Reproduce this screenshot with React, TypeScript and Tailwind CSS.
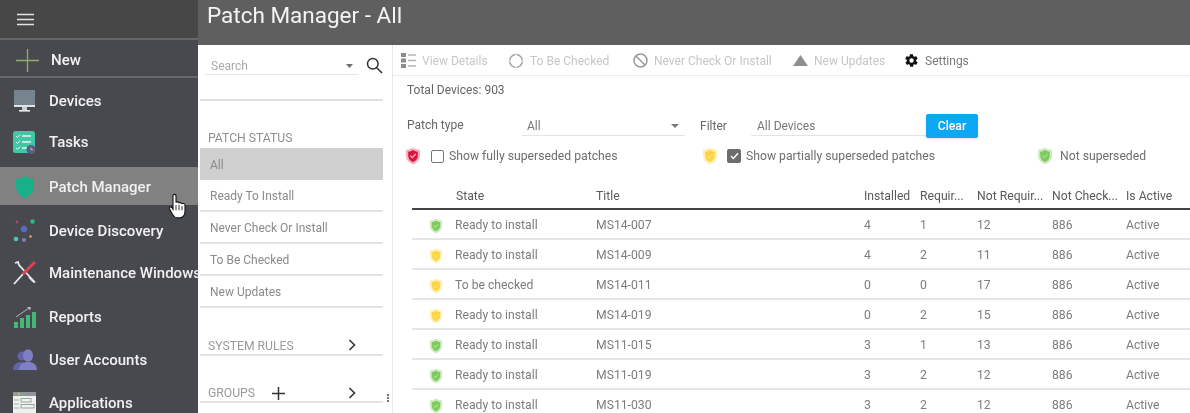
import React from "react";

const Shield = ({ fill, edge, check, w = 16, h = 18 }: { fill: string; edge: string; check: string; w?: number; h?: number }) => (
  <svg width={w} height={h} viewBox="0 0 16 18" preserveAspectRatio="none" className="shrink-0">
    <path d="M8 .6C10 2 12.4 2.7 15 2.8V8.5C15 12.8 12.2 15.6 8 17.4 3.8 15.6 1 12.8 1 8.5V2.8C3.6 2.7 6 2 8 .6Z" fill={edge} />
    <path d="M8 3C9.6 4 11.2 4.5 12.8 4.7V8.7C12.8 11.6 11 13.6 8 15 5 13.6 3.2 11.6 3.2 8.7V4.7C4.8 4.5 6.4 4 8 3Z" fill={fill} />
    <path d="M5.3 8.6 7.3 10.6 10.8 6.8" fill="none" stroke={check} strokeWidth="1.2" />
  </svg>
);
const green = { fill: "#7ccb5b", edge: "#cfeac2", check: "#a6dd8e" };
const yellow = { fill: "#fdd53f", edge: "#fdf0b5", check: "#fde27f" };

const NavRow = ({ icon, label, active, h }: { icon: React.ReactNode; label: string; active?: boolean; h: string }) => (
  <div className={`flex items-center ${h} ${active ? "bg-[#818181] pt-[2px]" : ""} text-[#f1f1f3] text-[15px] font-medium whitespace-nowrap overflow-hidden`}>
    <div className="w-[49px] pl-[13px] shrink-0 flex items-center">{icon}</div>
    <span>{label}</span>
  </div>
);

const DevicesIcon = () => (
  <svg width="23" height="22" viewBox="0 0 23 22"><rect x="1" y="0" width="21" height="15" fill="#76848f" /><rect x="1" y="15" width="21" height="2" fill="#dfe3e6" /><rect x="9" y="17" width="5" height="3" fill="#c9ced2" /><rect x="6" y="20" width="11" height="1.6" fill="#e8e8e8" /></svg>
);
const TasksIcon = () => (
  <svg width="23" height="23" viewBox="0 0 23 23"><rect x="0" y="0" width="22" height="22" rx="2.5" fill="#3fc7a6" /><path d="M3 5 4.5 6.5 7 3.5M3 11 4.5 12.5 7 9.5M3 17 4.5 18.5 7 15.5" fill="none" stroke="#e4f7f1" strokeWidth="1" /><path d="M9 5H18M9 11H18M9 17H14" stroke="#e4f7f1" strokeWidth="1.3" /><circle cx="18" cy="18.5" r="4.5" fill="#5d5a80" /><path d="M18 16.5V18.7H20" stroke="#d5d3e4" strokeWidth=".8" fill="none" /></svg>
);
const DiscoveryIcon = () => (
  <svg width="24" height="24" viewBox="0 0 24 24"><circle cx="4" cy="3" r="1.4" fill="#a8486c" /><circle cx="19.5" cy="2.5" r="2.3" fill="#2fb57f" /><circle cx="11" cy="10" r="3.2" fill="#5c68bd" /><circle cx="3" cy="20" r="2.3" fill="#4cc9b0" /><circle cx="11" cy="21" r="2.1" fill="#8d76b8" /><circle cx="17.5" cy="17.5" r="1.2" fill="#d9b64a" /></svg>
);
const MaintIcon = () => (
  <svg width="24" height="24" viewBox="0 0 24 24"><path d="M2 2 5 1 6 4 22 21.5" fill="none" stroke="#ebebeb" strokeWidth="1.8" /><path d="M16 16 21 21" stroke="#e8e8e8" strokeWidth="2" /><path d="M1 23 10 13" stroke="#ebebeb" strokeWidth="1.8" /><path d="M10 13 22 1" stroke="#d84450" strokeWidth="3" /></svg>
);
const ReportsIcon = () => (
  <svg width="23" height="22" viewBox="0 0 23 22"><rect x="1" y="16" width="4" height="6" fill="#45b877" /><rect x="7" y="12" width="4" height="10" fill="#45b877" /><rect x="13" y="9" width="4" height="13" fill="#45b877" /><rect x="19" y="6" width="4" height="16" fill="#45b877" /><path d="M3 11 16 2" stroke="#b5b5b8" strokeWidth="1" /><path d="M14 1 18 1 17 4.5Z" fill="#b5b5b8" /></svg>
);
const UsersIcon = () => (
  <svg width="24" height="22" viewBox="0 0 24 22"><circle cx="9" cy="7" r="4.5" fill="#6263a8" /><path d="M0 21C0 15 4 13 9 13S14 16 14 21Z" fill="#6263a8" /><ellipse cx="15" cy="6.5" rx="5" ry="6.3" fill="#7f80c4" /><path d="M6 21C6 15.5 10 13 15 13S24 15.5 24 21Z" fill="#7f80c4" /></svg>
);
const AppsIcon = () => (
  <svg width="23" height="23" viewBox="0 0 23 23"><rect width="23" height="23" fill="#eef1ee" /><rect width="23" height="4" fill="#8f9498" /><circle cx="2.5" cy="2" r="1" fill="#d9a24a" /><circle cx="6" cy="2" r="1" fill="#c9d06a" /><circle cx="9.5" cy="2" r="1" fill="#7fb66a" /><path d="M1 8H6M1 12H6M1 16H6" stroke="#9db4a4" /><rect x="8" y="6.5" width="10" height="3.5" fill="none" stroke="#9aa5a0" /><rect x="8" y="12.5" width="13" height="3.5" fill="none" stroke="#9aa5a0" /></svg>
);

const StatusItem = ({ label, active }: { label: string; active?: boolean }) => (
  <div className={`h-[32px] pl-[10px] pt-[2px] flex items-center text-[12px] text-[#8a8a8a] ${active ? "bg-[#cfcfcf]" : "border-b-2 border-[#e3e3e3]"}`}>
    {label}
  </div>
);

const Tool = ({ icon, label, dark, w }: { icon: React.ReactNode; label: string; dark?: boolean; w: string }) => (
  <div className={`flex items-center gap-[6px] ${w} text-[12px] ${dark ? "text-[#7a7a7a]" : "text-[#c6c6c6]"} whitespace-nowrap`}>
    {icon}
    <span>{label}</span>
  </div>
);

const rows = [
  ["g", "Ready to install", "MS14-007", "4", "1", "12", "886"],
  ["y", "Ready to install", "MS14-009", "4", "2", "11", "886"],
  ["y", "To be checked", "MS14-011", "0", "0", "17", "886"],
  ["y", "Ready to install", "MS14-019", "0", "2", "15", "886"],
  ["g", "Ready to install", "MS11-015", "3", "1", "13", "886"],
  ["g", "Ready to install", "MS11-019", "3", "2", "12", "886"],
  ["g", "Ready to install", "MS11-030", "3", "2", "12", "886"],
];
const grid = "grid grid-cols-[43px_141px_268px_56px_57px_75px_74px_1fr] items-center";

export default function App() {
  return (
    <div className="w-[1190px] h-[413px] overflow-hidden flex bg-white font-['Roboto',sans-serif] relative blur-[0.35px]">
      <aside className="w-[198px] shrink-0 bg-[#48494e] flex flex-col">
        <div className="h-[40px] shrink-0 bg-[#474747] border-b-2 border-[#66676a] flex items-center pl-[17px]">
          <svg width="17" height="13" viewBox="0 0 17 13"><path d="M0 1.5H17M0 6.5H17M0 11.5H17" stroke="#e4e4e4" strokeWidth="1.5" /></svg>
        </div>
        <div className="h-[38px] shrink-0 pt-[4px] border-b-2 border-[#66676a] flex items-center pl-[16px] text-[15px] font-medium text-[#f3f3f3]">
          <svg width="23" height="23" viewBox="0 0 23 23" className="mr-[12px]"><path d="M11.5 0V23M0 11.5H23" stroke="#92ad6a" strokeWidth="1.3" /></svg>
          New
        </div>
        <NavRow h="h-[46px] shrink-0" icon={<DevicesIcon />} label="Devices" />
        <NavRow h="h-[36px] shrink-0" icon={<TasksIcon />} label="Tasks" />
        <div className="h-[7px] shrink-0" />
        <NavRow h="h-[38px] shrink-0" active icon={<span className="pl-[3px] flex"><svg width="18" height="22" viewBox="0 0 18 22"><path d="M9 0C11.5 1.7 14.5 2.7 18 3V10C18 15.5 14.5 19.5 9 22 3.5 19.5 0 15.5 0 10V3C3.5 2.7 6.5 1.7 9 0Z" fill="#17b088" /></svg></span>} label="Patch Manager" />
        <NavRow h="h-[52px] shrink-0" icon={<DiscoveryIcon />} label="Device Discovery" />
        <NavRow h="h-[32px] shrink-0" icon={<MaintIcon />} label="Maintenance Windows" />
        <NavRow h="h-[56px] shrink-0" icon={<ReportsIcon />} label="Reports" />
        <NavRow h="h-[30px] shrink-0" icon={<UsersIcon />} label="User Accounts" />
        <NavRow h="h-[56px] shrink-0" icon={<AppsIcon />} label="Applications" />
      </aside>

      <div className="flex-1 flex flex-col min-w-0">
        <header className="h-[45px] shrink-0 bg-[#5f5f5f] pl-[9px] text-[22.5px] leading-[30px] text-[#f4f4f4]">
          Patch Manager - All
        </header>
        <div className="flex-1 flex min-h-0">
          <section className="w-[183px] shrink-0 ml-[2px] flex flex-col">
            <div className="h-[56px] shrink-0 border-b-2 border-[#e0e0e0] pt-[9px] pl-[5px] flex items-start">
              <div className="w-[154px] h-[21px] pt-[3px] border-b border-[#e6e6e6] flex items-center justify-between pl-[6px] pr-[6px] text-[12px] text-[#aaaaaa]">
                Search
                <svg width="7" height="4" viewBox="0 0 7 4"><path d="M0 0H7L3.5 4Z" fill="#6f6f6f" /></svg>
              </div>
              <svg width="17" height="17" viewBox="0 0 17 17" className="ml-[7px] mt-[3px]"><circle cx="6.8" cy="6.8" r="5.3" fill="none" stroke="#333" strokeWidth="1.5" /><path d="M10.7 10.7 16 16" stroke="#333" strokeWidth="1.6" /></svg>
            </div>
            <div className="h-[47px] shrink-0 pl-[8px] pt-[29px] text-[12.2px] leading-[16px] text-[#8f8f8f]">PATCH STATUS</div>
            <StatusItem label="All" active />
            <StatusItem label="Ready To Install" />
            <StatusItem label="Never Check Or Install" />
            <StatusItem label="To Be Checked" />
            <StatusItem label="New Updates" />
            <div className="h-[48px] shrink-0 border-b-2 border-[#e3e3e3] pl-[8px] pr-[26px] flex items-end justify-between text-[12.2px] leading-[13px] text-[#9a9a9a] pb-[1px]">
              <span>SYSTEM RULES</span>
              <svg width="9" height="12" viewBox="0 0 9 12" className="mb-[2px]"><path d="M1.5 1 6.5 6 1.5 11" fill="none" stroke="#333" strokeWidth="1.6" /></svg>
            </div>
            <div className="h-[47px] shrink-0 border-b-2 border-[#e3e3e3] pl-[8px] pr-[26px] flex items-end text-[12.2px] leading-[13px] text-[#9a9a9a] pb-[1px]">
              <span>GROUPS</span>
              <svg width="13" height="13" viewBox="0 0 13 13" className="ml-[17px]"><path d="M6.5 0V13M0 6.5H13" stroke="#333" strokeWidth="1.5" /></svg>
              <svg width="9" height="12" viewBox="0 0 9 12" className="ml-auto mb-[1px]"><path d="M1.5 1 6.5 6 1.5 11" fill="none" stroke="#333" strokeWidth="1.6" /></svg>
            </div>
          </section>

          <div className="w-[10px] shrink-0 flex flex-col items-center justify-end pb-[11px] gap-[1px] border-r border-[#e8e8e8]">
            <span className="w-[2px] h-[2px] bg-[#777]" />
            <span className="w-[2px] h-[2px] bg-[#777]" />
            <span className="w-[2px] h-[2px] bg-[#777]" />
          </div>

          <main className="flex-1 min-w-0 flex flex-col">
            <div className="h-[31px] shrink-0 pt-[1px] border-b border-[#ececec] flex items-center pl-[8px]">
              <Tool w="w-[107px]" label="View Details" icon={<svg width="15" height="15" viewBox="0 0 15 15"><path d="M0 0H5V4H0ZM0 5.5H5V9.5H0ZM0 11H5V15H0Z" fill="#8c8c8c" /><path d="M7 2H15M7 7.5H15M7 13H15" stroke="#b5b5b5" strokeWidth="1.3" /></svg>} />
              <Tool w="w-[125px]" label="To Be Checked" icon={<svg width="16" height="16" viewBox="0 0 16 16"><circle cx="8" cy="8" r="6.4" fill="none" stroke="#a3a3a3" strokeWidth="1.5" /><path d="M8 0V3M8 13V16M0 8H3M13 8H16" stroke="#fff" strokeWidth="1" /></svg>} />
              <Tool w="w-[160px]" label="Never Check Or Install" icon={<svg width="15" height="15" viewBox="0 0 15 15"><circle cx="7.5" cy="7.5" r="6.5" fill="none" stroke="#9a9a9a" strokeWidth="1.5" /><path d="M3 3 12 12" stroke="#9a9a9a" strokeWidth="1.5" /></svg>} />
              <Tool w="w-[111px]" label="New Updates" icon={<svg width="15" height="11" viewBox="0 0 15 11"><path d="M7.5 0 15 11H0Z" fill="#8f8f8f" /></svg>} />
              <Tool w="w-[80px]" dark label="Settings" icon={<svg width="15" height="15" viewBox="0 0 24 24"><path fill="#111" d="M19.4 13c0-.3.1-.6.1-1s0-.7-.1-1l2.1-1.6c.2-.2.2-.4.1-.6l-2-3.5c-.1-.2-.4-.3-.6-.2l-2.5 1c-.5-.4-1.1-.7-1.7-1l-.4-2.6c0-.3-.2-.5-.5-.5h-4c-.3 0-.5.2-.5.4l-.4 2.7c-.6.2-1.2.6-1.7 1l-2.5-1c-.2-.1-.5 0-.6.2l-2 3.5c-.1.2-.1.5.1.6L4.6 11c0 .3-.1.7-.1 1s0 .7.1 1l-2.1 1.6c-.2.2-.2.4-.1.6l2 3.5c.1.2.4.3.6.2l2.5-1c.5.4 1.1.7 1.7 1l.4 2.6c0 .3.2.5.5.5h4c.3 0 .5-.2.5-.4l.4-2.7c.6-.2 1.2-.6 1.7-1l2.5 1c.2.1.5 0 .6-.2l2-3.5c.1-.2.1-.5-.1-.6zM12 15.5a3.5 3.5 0 1 1 0-7 3.5 3.5 0 0 1 0 7z" /></svg>} />
            </div>
            <div className="h-[34px] shrink-0 pl-[14px] pt-[6px] text-[12px] leading-[16px] text-[#666]">Total Devices: 903</div>
            <div className="h-[32px] shrink-0 flex items-center pl-[14px] text-[12px] text-[#666]">
              <span className="w-[115px] -mt-[3px]">Patch type</span>
              <div className="w-[163px] h-[22px] -mt-[2px] pt-[3px] border-b border-[#e4e4e4] flex items-center justify-between pl-[5px] pr-[6px] text-[#777]">
                All
                <svg width="8" height="4" viewBox="0 0 8 4"><path d="M0 0H8L4 4Z" fill="#777" /></svg>
              </div>
              <span className="ml-[15px] w-[51px] -mt-[1px]">Filter</span>
              <div className="w-[175px] h-[22px] -mt-[2px] pt-[3px] border-b border-[#e4e4e4] pl-[6px] flex items-center text-[#777]">All Devices</div>
              <div className="w-[52px] h-[24px] bg-[#0da7f3] rounded-[2px] shadow-sm text-white text-[12.2px] font-medium flex items-center justify-center">Clear</div>
            </div>
            <div className="h-[29px] shrink-0 flex items-center text-[12.2px] text-[#6e6e6e]">
              <div className="w-[309px] flex items-center pl-[12px]">
                <Shield fill="#dc143c" edge="#f3b2bf" check="#f7c2ce" />
                <span className="w-[13px] h-[13px] ml-[10px] mr-[5px] rounded-[2px] border-[1.5px] border-[#777]" />
                Show fully superseded patches
              </div>
              <div className="w-[335px] flex items-center">
                <Shield {...yellow} />
                <span className="w-[14px] h-[14px] ml-[9px] mr-[5px] rounded-[2px] bg-[#6d6d6d] flex items-center justify-center">
                  <svg width="9" height="8" viewBox="0 0 9 8"><path d="M1 4 3.4 6.4 8 1.2" fill="none" stroke="#fff" strokeWidth="1.4" /></svg>
                </span>
                Show partially superseded patches
              </div>
              <div className="flex items-center gap-[7px]">
                <Shield {...green} />
                Not superseded
              </div>
            </div>
            <div className="ml-[19px] text-[12.2px]">
              <div className={`${grid} h-[39px] pt-[13px] border-b-2 border-[#444] text-[#5a5a5a]`}>
                <span />
                <span className="pl-[1px]">State</span>
                <span>Title</span>
                <span>Installed</span>
                <span>Requir...</span>
                <span>Not Requir...</span>
                <span>Not Check...</span>
                <span>Is Active</span>
              </div>
              {rows.map((r) => (
                <div key={r[2]} className={`${grid} h-[30px] pt-[3px] border-b-2 border-[#e6e6e6] text-[#7d7d7d]`}>
                  <span className="pl-[17px] flex"><Shield w={14} h={16} {...(r[0] === "g" ? green : yellow)} /></span>
                  <span>{r[1]}</span>
                  <span>{r[2]}</span>
                  <span>{r[3]}</span>
                  <span>{r[4]}</span>
                  <span>{r[5]}</span>
                  <span>{r[6]}</span>
                  <span>Active</span>
                </div>
              ))}
            </div>
          </main>
        </div>
      </div>
      <svg width="20" height="26" viewBox="0 0 20 24" preserveAspectRatio="none" className="absolute left-[168px] top-[193px]">
        <path d="M5 2.5C5 .8 8 .8 8 2.5V9C8 7.8 11 7.8 11 9.5 11 8.5 14 8.5 14 10.2 14 9.4 17 9.4 17 11V17C17 20 15 23 12 23H9C6.5 23 5.5 21 4 19L1.5 14.5C.8 13 3 12 4 13.5L5 15Z" fill="#fff" stroke="#111" strokeWidth="1.1" />
        <path d="M8 11V16M11 11V16M14 12V16" stroke="#111" strokeWidth=".8" />
      </svg>
    </div>
  );
}
